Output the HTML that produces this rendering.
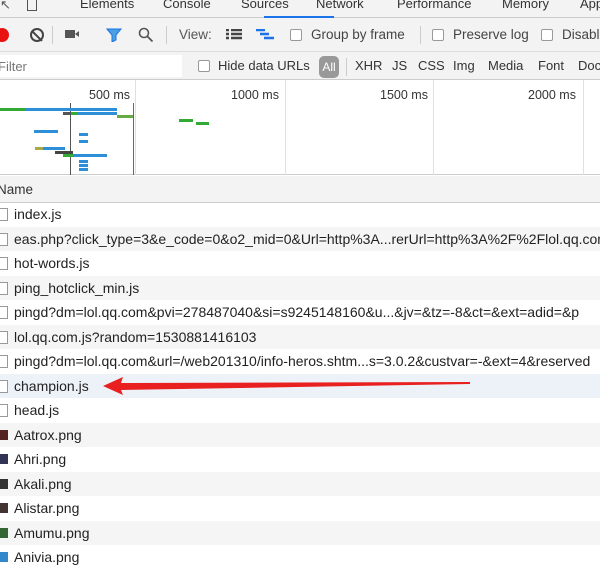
<!DOCTYPE html>
<html><head><meta charset="utf-8"><style>
*{margin:0;padding:0;box-sizing:border-box}
body{width:600px;height:565px;overflow:hidden;background:#fff;font-family:"Liberation Sans",sans-serif;font-size:13px;color:#333;position:relative}
.abs{position:absolute;white-space:nowrap}
.tabs{position:absolute;left:0;top:0;width:600px;height:18px;background:#f3f3f3;border-bottom:1px solid #ccc}
.tb{position:absolute;left:0;top:18px;width:600px;height:34px;background:#f3f3f3;border-bottom:1px solid #ddd;font-size:13.5px}
.fb{position:absolute;left:0;top:52px;width:600px;height:28px;background:#f3f3f3;border-bottom:1px solid #ccc}
.cb{position:absolute;width:12px;height:12px;border:1px solid #999;border-radius:2px;background:#fff}
.tl{position:absolute;left:0;top:80px;width:600px;height:95px;background:#fff;border-bottom:1px solid #ccc}
.hdr{position:absolute;left:0;top:176px;width:600px;height:27px;background:#f3f3f3;border-bottom:1px solid #ccc}
.row{position:absolute;left:0;width:600px;height:24.5px;line-height:25px;padding-left:14px;font-size:14px;color:#222;white-space:nowrap;overflow:hidden}
.row:nth-child(even){background:#f5f5f5}
.ic{position:absolute;left:0;top:6px;width:8px;height:13px;border:1px solid #999;border-left:none;background:#fff}
.img{position:absolute;left:0;top:7px;width:8px;height:10px;background:#333}
.g{position:absolute;top:80px;width:1px;height:95px;background:#e0e0e0}
.bar{position:absolute;height:3px}
.ms{font-size:12.5px}
</style></head><body>
<div class="tabs">
<span class="abs" style="left:0;top:-3px;color:#555">↖</span>
<div class="abs" style="left:27px;top:-2px;width:10px;height:13px;border:1px solid #555"></div>
<span class="abs" style="left:80px;top:-4px;color:#333">Elements</span>
<span class="abs" style="left:163px;top:-4px">Console</span>
<span class="abs" style="left:241px;top:-4px">Sources</span>
<span class="abs" style="left:316px;top:-4px">Network</span>
<span class="abs" style="left:397px;top:-4px">Performance</span>
<span class="abs" style="left:502px;top:-4px">Memory</span>
<span class="abs" style="left:580px;top:-4px">App</span>
<div class="abs" style="left:264px;top:16px;width:70px;height:2px;background:#1a73e8"></div>
</div>
<div class="tb">
<div class="abs" style="left:-5px;top:10px;width:14px;height:14px;border-radius:50%;background:#e81010"></div>
<div class="abs" style="left:30px;top:10px;width:14px;height:14px;border-radius:50%;border:2px solid #444"></div>
<div class="abs" style="top:11px;width:2px;height:14px;background:#444;transform:rotate(-45deg);left:36px"></div>
<div class="abs" style="left:52px;top:8px;width:1px;height:18px;background:#ccc"></div>
<div class="abs" style="left:65px;top:12px;width:10px;height:8px;background:#555"></div>
<div class="abs" style="left:75px;top:13px;width:0;height:0;border-top:3px solid transparent;border-bottom:3px solid transparent;border-right:4px solid #555"></div>
<svg class="abs" style="left:106px;top:10px" width="16" height="14"><path d="M1 1h14l-5 6v5l-4 2v-7z" fill="#4aa0e0" stroke="#1a73e8"/></svg>
<svg class="abs" style="left:138px;top:9px" width="16" height="16"><circle cx="6" cy="6" r="4.5" fill="none" stroke="#555" stroke-width="1.6"/><path d="M9.5 9.5l5 5" stroke="#555" stroke-width="1.8"/></svg>
<div class="abs" style="left:166px;top:8px;width:1px;height:18px;background:#ccc"></div>
<span class="abs" style="left:179px;top:9px;color:#555">View:</span>
<svg class="abs" style="left:226px;top:11px" width="16" height="12"><path d="M0 1h3M5 1h11M0 5h3M5 5h11M0 9h3M5 9h11" stroke="#444" stroke-width="2.5"/></svg>
<svg class="abs" style="left:256px;top:11px" width="20" height="12"><path d="M0 1h9M4 5h9M8 9h10" stroke="#1a73e8" stroke-width="2.5"/></svg>
<div class="cb" style="left:290px;top:11px"></div>
<span class="abs" style="left:311px;top:9px;color:#444">Group by frame</span>
<div class="abs" style="left:420px;top:8px;width:1px;height:18px;background:#ccc"></div>
<div class="cb" style="left:432px;top:11px"></div>
<span class="abs" style="left:453px;top:9px;color:#444">Preserve log</span>
<div class="cb" style="left:541px;top:11px"></div>
<span class="abs" style="left:562px;top:9px;color:#444">Disable</span>
</div>
<div class="fb">
<div class="abs" style="left:0;top:3px;width:182px;height:22px;background:#fff"></div>
<span class="abs" style="left:-2px;top:7px;color:#777">Filter</span>
<div class="cb" style="left:198px;top:8px"></div>
<span class="abs" style="left:218px;top:6px;color:#333">Hide data URLs</span>
<div class="abs" style="left:319px;top:4px;width:20px;height:22px;background:#999;border-radius:5px;color:#fff;text-align:center;line-height:22px;font-size:12px">All</div>
<div class="abs" style="left:346px;top:6px;width:1px;height:18px;background:#ccc"></div>
<span class="abs" style="left:355px;top:6px">XHR</span>
<span class="abs" style="left:392px;top:6px">JS</span>
<span class="abs" style="left:418px;top:6px">CSS</span>
<span class="abs" style="left:453px;top:6px">Img</span>
<span class="abs" style="left:488px;top:6px">Media</span>
<span class="abs" style="left:538px;top:6px">Font</span>
<span class="abs" style="left:578px;top:6px">Doc</span>
</div>
<div class="tl"></div>
<div class="g" style="left:135px"></div><div class="g" style="left:285px"></div><div class="g" style="left:433px"></div><div class="g" style="left:583px"></div>
<span class="abs ms" style="left:89px;top:88px">500 ms</span>
<span class="abs ms" style="left:231px;top:88px">1000 ms</span>
<span class="abs ms" style="left:380px;top:88px">1500 ms</span>
<span class="abs ms" style="left:528px;top:88px">2000 ms</span>
<div class="abs" style="left:70px;top:103px;width:1px;height:72px;background:#555"></div>
<div class="abs" style="left:133px;top:103px;width:1px;height:72px;background:#d04020"></div>
<div class="bar" style="left:0;top:108px;width:117px;background:linear-gradient(90deg,#3a3 0 25px,#2d8fd8 25px)"></div>
<div class="bar" style="left:63px;top:112px;width:54px;background:linear-gradient(90deg,#555 0 8px,#3a3 8px 14px,#2d8fd8 14px)"></div>
<div class="bar" style="left:117px;top:115px;width:16px;background:#6a4"></div>
<div class="bar" style="left:34px;top:130px;width:24px;background:#2d8fd8"></div>
<div class="bar" style="left:79px;top:133px;width:9px;background:#2d8fd8"></div>
<div class="bar" style="left:79px;top:140px;width:9px;background:#2d8fd8"></div>
<div class="bar" style="left:35px;top:147px;width:30px;background:linear-gradient(90deg,#aa4 0 8px,#2d8fd8 8px)"></div>
<div class="bar" style="left:55px;top:151px;width:18px;background:#444"></div>
<div class="bar" style="left:63px;top:154px;width:44px;background:linear-gradient(90deg,#3a3 0 10px,#2d8fd8 10px)"></div>
<div class="bar" style="left:79px;top:160px;width:9px;background:#2d8fd8"></div>
<div class="bar" style="left:79px;top:164px;width:9px;background:#2d8fd8"></div>
<div class="bar" style="left:79px;top:168px;width:9px;background:#2d8fd8"></div>
<div class="bar" style="left:179px;top:119px;width:14px;background:#3a3"></div>
<div class="bar" style="left:196px;top:122px;width:13px;background:#3a3"></div>
<div class="hdr"><span class="abs" style="left:-3px;top:6px;font-size:13.5px">Name</span></div>
<div style="position:absolute;left:0;top:202px;width:600px">
<div class="row" style="top:0"><div class="ic"></div>index.js</div>
<div class="row" style="top:24.5px"><div class="ic"></div>eas.php?click_type=3&amp;e_code=0&amp;o2_mid=0&amp;Url=http%3A...rerUrl=http%3A%2F%2Flol.qq.com</div>
<div class="row" style="top:49px"><div class="ic"></div>hot-words.js</div>
<div class="row" style="top:73.5px"><div class="ic"></div>ping_hotclick_min.js</div>
<div class="row" style="top:98px"><div class="ic"></div>pingd?dm=lol.qq.com&amp;pvi=278487040&amp;si=s9245148160&amp;u...&amp;jv=&amp;tz=-8&amp;ct=&amp;ext=adid=&amp;p</div>
<div class="row" style="top:122.5px"><div class="ic"></div>lol.qq.com.js?random=1530881416103</div>
<div class="row" style="top:147px"><div class="ic"></div>pingd?dm=lol.qq.com&amp;url=/web201310/info-heros.shtm...s=3.0.2&amp;custvar=-&amp;ext=4&amp;reserved</div>
<div class="row" style="top:171.5px;background:#edf2f9"><div class="ic"></div>champion.js</div>
<div class="row" style="top:196px"><div class="ic"></div>head.js</div>
<div class="row" style="top:220.5px"><div class="img" style="background:#522"></div>Aatrox.png</div>
<div class="row" style="top:245px"><div class="img" style="background:#335"></div>Ahri.png</div>
<div class="row" style="top:269.5px"><div class="img"></div>Akali.png</div>
<div class="row" style="top:294px"><div class="img" style="background:#433"></div>Alistar.png</div>
<div class="row" style="top:318.5px"><div class="img" style="background:#363"></div>Amumu.png</div>
<div class="row" style="top:343px"><div class="img" style="background:#38c"></div>Anivia.png</div>
</div>
<svg class="abs" style="left:0;top:0" width="600" height="565"><polygon points="103,386 123,377 121,383 470,382 470,384 121,390 123,395" fill="#e82020"/></svg>
</body></html>
